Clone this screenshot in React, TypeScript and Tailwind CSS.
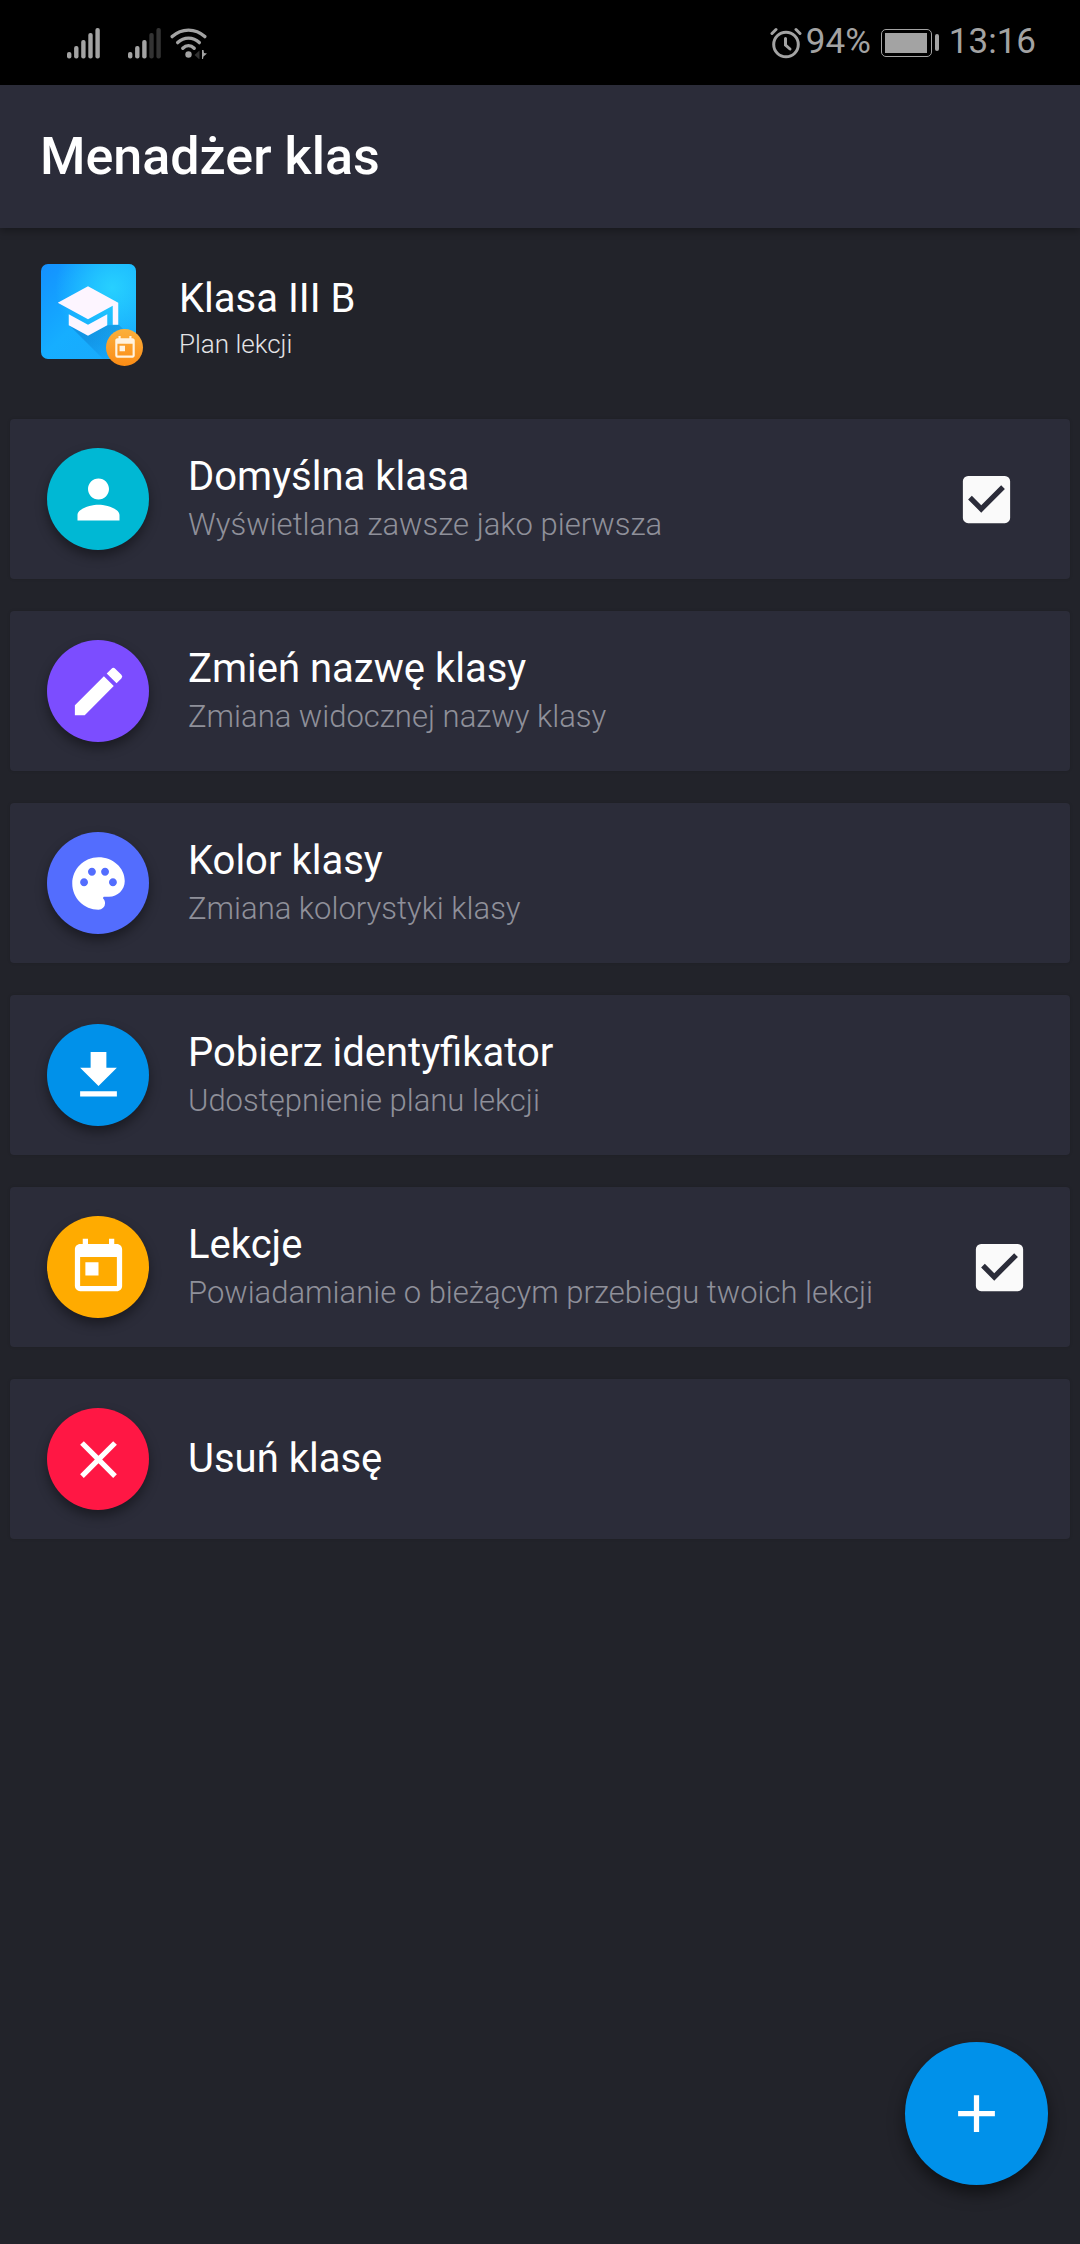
import type { IconType } from "react-icons";
import {
  MdAdd,
  MdCheckBox,
  MdClose,
  MdEdit,
  MdFileDownload,
  MdPalette,
  MdPerson,
  MdSchool,
  MdToday,
} from "react-icons/md";
import { clsx } from "clsx";

type Option = {
  title: string;
  subtitle?: string;
  icon: IconType;
  color: string;
  checkbox?: string;
};

const options: Option[] = [
  {
    title: "Domyślna klasa",
    subtitle: "Wyświetlana zawsze jako pierwsza",
    icon: MdPerson,
    color: "bg-[#00b8d4]",
    checkbox: "mr-[52px]",
  },
  { title: "Zmień nazwę klasy", subtitle: "Zmiana widocznej nazwy klasy", icon: MdEdit, color: "bg-[#7c4dff]" },
  { title: "Kolor klasy", subtitle: "Zmiana kolorystyki klasy", icon: MdPalette, color: "bg-[#536dfe]" },
  { title: "Pobierz identyfikator", subtitle: "Udostępnienie planu lekcji", icon: MdFileDownload, color: "bg-[#0091ea]" },
  {
    title: "Lekcje",
    subtitle: "Powiadamianie o bieżącym przebiegu twoich lekcji",
    icon: MdToday,
    color: "bg-[#ffab00]",
    checkbox: "mr-[39px]",
  },
  { title: "Usuń klasę", icon: MdClose, color: "bg-[#ff1744]" },
];

function Signal({ level }: { level: number }) {
  const tops = [51, 45, 39, 32, 27];
  return (
    <svg viewBox="0 26 34 32" className="h-8 w-[34px]">
      {tops.map((top, i) => (
        <rect key={top} x={i * 7.1} y={top} width="4.4" height={57.5 - top} rx="2" fill={i < level ? "#a3a3a3" : "#333333"} />
      ))}
    </svg>
  );
}

function Wifi() {
  return (
    <svg viewBox="0 0 38 32" className="ml-2 h-8 w-[38px]" fill="none" stroke="#a3a3a3" strokeWidth="3.4" strokeLinecap="round">
      <path d="M2.2 9.6C11.5 1 25.500 1 34.800 9.600" />
      <path d="M7.700 15.600C14 9.600 23 9.600 29.300 15.600" />
      <path d="M12.800 21.200C16.300 17.700 20.700 17.700 24.200 21.200" />
      <circle cx="18.500" cy="27.500" r="3.200" fill="#a3a3a3" stroke="none" />
      <path d="M24.500 28l5-4.500v9z" fill="#333" stroke="none" />
      <path d="M32 23l1.500 0 0.500 3 3 0.500-3.500 3-0.500 2.500h-1z" fill="#a3a3a3" stroke="none" />
    </svg>
  );
}

function Alarm() {
  return (
    <svg viewBox="0 0 32 32" className="h-8 w-8" fill="none" stroke="#a3a3a3" strokeLinecap="round">
      <circle cx="16" cy="17.500" r="12.300" strokeWidth="3" />
      <path d="M2 6.500l4-4M30 6.500l-4-4" strokeWidth="3" />
      <path d="M15.500 11.500v6.500l4.500 4" strokeWidth="3" />
    </svg>
  );
}

function StatusBar() {
  return (
    <div className="flex h-[85px] items-center bg-black pr-11 pl-[67px] text-[35px] text-[#a3a3a3]">
      <Signal level={5} />
      <div className="w-[27px]" />
      <Signal level={3} />
      <Wifi />
      <div className="ml-auto flex items-center">
        <Alarm />
        <span className="ml-1">94%</span>
        <div className="ml-2.5 h-[28px] w-[51px] rounded-[5px] border border-[#a3a3a3] p-[3px]">
          <div className="h-full w-[42px] bg-[#a3a3a3]" />
        </div>
        <div className="ml-[3px] h-[17px] w-1 rounded-sm bg-[#a3a3a3]" />
        <span className="ml-2.5">13:16</span>
      </div>
    </div>
  );
}

function ClassHeader() {
  return (
    <section className="flex h-[191px] items-start pt-9 pl-[41px]">
      <div className="relative size-[95px] rounded-[7px] bg-linear-to-br from-[#1590ff] via-[#16aeff] to-[#19a9fb]">
        <svg viewBox="0 0 95 95" className="absolute inset-0 size-[95px]">
          <defs>
            <radialGradient id="glow" cx="0.75" cy="0.25" r="0.6">
              <stop offset="0" stopColor="#27d0ff" />
              <stop offset="1" stopColor="#27d0ff" stopOpacity="0" />
            </radialGradient>
            <linearGradient id="shade" x1="0.3" y1="0.3" x2="0.9" y2="0.9">
              <stop offset="0" stopColor="#0a6ec0" stopOpacity="0.4" />
              <stop offset="1" stopColor="#0a6ec0" stopOpacity="0" />
            </linearGradient>
          </defs>
          <rect width="95" height="95" rx="7" fill="url(#glow)" />
          <path d="M29 62L78 61L95 78V88Q95 95 88 95H62Z" fill="url(#shade)" />
        </svg>
        <MdSchool className="absolute top-3.5 left-3.5 size-[66px] text-[#fdf5ff]" />
        <div className="absolute top-[65px] left-[65px] grid size-[37px] place-items-center rounded-full bg-linear-to-b from-[#fbb03a] to-[#fb8c13]">
          <MdToday className="size-[26px] text-[#fff3e0]" />
        </div>
      </div>
      <div className="mt-[9px] ml-[43px]">
        <h2 className="text-[40px] leading-[52px]">Klasa III B</h2>
        <p className="text-[26px] leading-[38px] font-light text-[#e4e4e6]">Plan lekcji</p>
      </div>
    </section>
  );
}

function OptionCard({ title, subtitle, icon: Icon, color, checkbox }: Option) {
  return (
    <li className="flex h-40 items-center rounded-[4px] bg-[#2b2c39] pl-[37px] shadow-[0_0_3px_rgba(0,0,0,0.15)]">
      <div className={clsx("grid size-[102px] place-items-center rounded-full shadow-[0_6px_12px_rgba(0,0,0,0.4)]", color)}>
        <Icon className="size-[63px]" />
      </div>
      <div className="ml-[39px] flex-1">
        <h3 className="text-[40px] leading-[52px]">{title}</h3>
        {subtitle && <p className="text-[31px] leading-[44px] font-light text-[#8f909a]">{subtitle}</p>}
      </div>
      {checkbox && <MdCheckBox className={clsx("size-[63px] text-[#fafafa]", checkbox)} />}
    </li>
  );
}

export default function App() {
  return (
    <div className="relative h-[2244px] w-[1080px] overflow-hidden bg-[#22232a] font-[Roboto,sans-serif] text-white">
      <StatusBar />
      <header className="relative flex h-[143px] items-center bg-[#2b2c39] pl-10 shadow-[0_3px_8px_rgba(0,0,0,0.3)]">
        <h1 className="text-[52px] font-medium">Menadżer klas</h1>
      </header>
      <ClassHeader />
      <ul className="flex flex-col gap-8 px-2.5">
        {options.map((option) => (
          <OptionCard key={option.title} {...option} />
        ))}
      </ul>
      <button className="absolute right-8 bottom-[59px] grid size-[143px] place-items-center rounded-full bg-[#0091ea] shadow-[0_8px_16px_rgba(0,0,0,0.5)]">
        <MdAdd className="size-[63px]" />
      </button>
    </div>
  );
}
